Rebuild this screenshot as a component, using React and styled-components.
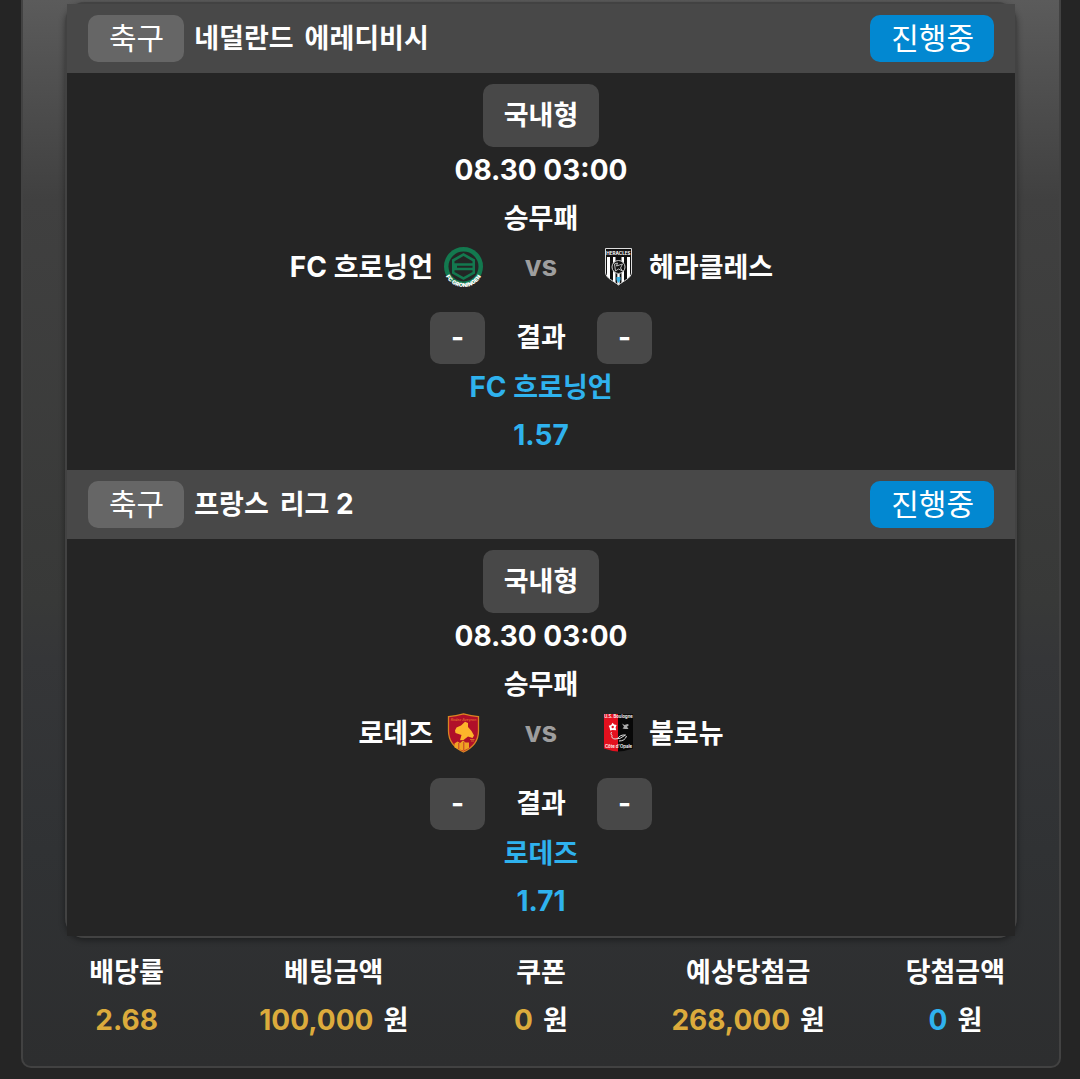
import React from 'react';
import styled, { createGlobalStyle, css } from 'styled-components';

const GlobalStyle = createGlobalStyle`
  *, *::before, *::after { box-sizing: border-box; }
  body {
    margin: 0;
    background: #252525;
    color: #fff;
    font-family: Inter, "Noto Sans CJK KR", sans-serif;
    font-size: 28px;
    font-weight: 700;
    line-height: 47px;
  }
`;

const Page = styled.main`
  min-height: 100vh;
  padding: 0 19px 11px 21px;
`;

const Slip = styled.section`
  padding: 2px 0 22px;
  border: 2px solid #424242;
  border-top: 0;
  border-radius: 0 0 10px 10px;
  background: linear-gradient(#5b5b5b 0, #404040 200px, #383938 600px, #353638 660px, #303234 850px, #2d2e2f 100%);
`;

const BetList = styled.div`
  margin: 0 42px 10px;
  border: 2px solid #424242;
  border-radius: 20px;
  box-shadow: 0 2px 6px rgba(0, 0, 0, 0.4);
`;

const Match = styled.article`
  background: #252525;
`;

const MatchHeader = styled.header`
  display: flex;
  align-items: center;
  gap: 10px;
  height: 69px;
  padding: 0 21px;
  background: #484848;
`;

const Tag = styled.span`
  padding: 0 20px 0 21px;
  border-radius: 10px;
  background: ${(p) => (p.$live ? '#0288d1' : '#666')};
  font-size: 30px;
  font-weight: 400;
`;

const League = styled.h2`
  display: flex;
  flex: 1;
  gap: 11px;
  margin: 0;
  font: inherit;
`;

const Hangul = styled.span`
  font-family: "Noto Sans CJK KR", sans-serif;
  font-size: 27px;
  line-height: 1;
`;

const MatchBody = styled.div`
  display: flex;
  flex-direction: column;
  align-items: center;
  padding: 11px 0 10px;
`;

const box = css`
  border-radius: 10px;
  background: #484848;
  text-align: center;
`;

const TypeBadge = styled.div`
  ${box}
  height: 63px;
  padding: 0 21px;
  line-height: 62px;
`;

const Line = styled.div`
  height: 48px;
  color: ${(p) => (p.$pick ? '#2fb2ee' : 'inherit')};
`;

const Teams = styled.div`
  display: grid;
  grid-template-columns: 1fr 114px 1fr;
  align-self: stretch;
  height: 48px;
`;

const Team = styled.div`
  display: flex;
  align-items: center;
  justify-content: ${(p) => (p.$home ? 'flex-end' : 'flex-start')};
  gap: 11px;

  svg { flex: none; }
`;

const Versus = styled.span`
  color: #9e9e9e;
  text-align: center;
`;

const Result = styled.div`
  display: grid;
  grid-template-columns: 55px 112px 55px;
  height: 52px;
  margin-top: 21px;
  line-height: 50px;
  text-align: center;
`;

const Score = styled.span`
  ${box}
`;

const Summary = styled.table`
  width: 100%;
  table-layout: fixed;
  border-collapse: collapse;

  th, td {
    height: 48px;
    padding: 0;
    font-weight: inherit;
    text-align: center;
  }
`;

const Amount = styled.span`
  color: ${(p) => (p.$won ? '#2fb2ee' : '#dcab3c')};
`;

const Unit = styled.span`
  margin-left: 10px;
`;

/* Renders Hangul runs and Latin runs in their own faces. */
const Mixed = ({ children }) =>
  children
    .split(/([가-힣]+)/)
    .filter(Boolean)
    .map((part, i) => (/[가-힣]/.test(part) ? <Hangul key={i}>{part}</Hangul> : part));

const Groningen = () => (
  <svg width="40" height="40" viewBox="0 0 40 40" role="img" aria-label="FC Groningen">
    <circle cx="19.500" cy="19.500" r="19.500" fill="#13794f" />
    <circle cx="19.500" cy="19.500" r="15" fill="#232625" />
    <path d="M19.500 6 31 12.500V26.500L19.500 33 8 26.500V12.500Z" fill="#13794f" />
    <path d="M19.500 9 28.500 14.300V16.200H10.500V14.300ZM13 18.800H28.500V20.700H13ZM10.500 23.300H28.500V25L19.500 30 10.500 25Z" fill="#232625" />
    <path id="groningen-arc" d="M1.500 28.500A19.800 19.800 0 0 0 37.500 28.500" fill="none" />
    <text fill="#fff" fontFamily="Inter, sans-serif" fontSize="5.600" fontWeight="900" textAnchor="middle">
      <textPath href="#groningen-arc" startOffset="50%">FC GRONINGEN</textPath>
    </text>
  </svg>
);

const Heracles = () => (
  <svg width="40" height="40" viewBox="0 0 40 40" role="img" aria-label="Heracles">
    <defs>
      <clipPath id="heracles-shield">
        <path d="M7.500 1.500H33.500V26C33 31 25.500 34 20.500 38 15.500 34 8 31 7.500 26Z" />
      </clipPath>
    </defs>
    <g clipPath="url(#heracles-shield)">
      <path d="M7 1H34V39H7Z" fill="#111" />
      <path d="M9 10H12V39H9ZM15 10H17.500V39H15ZM23.500 10H26V39H23.500ZM29 10H32V39H29ZM19.300 27H21.700V38H19.300Z" fill="#fff" />
      <circle cx="20.500" cy="20" r="6.500" fill="#111" stroke="#ccc" />
      <path d="M16.500 17 19.500 16 18.500 19 21.500 18 24.500 17 22.500 21 24.500 24 20.500 22 17.500 24Z" fill="none" stroke="#bbb" />
      <path d="M18.500 30H22.500V33L20.500 36 18.500 33Z" fill="#3db2e3" />
    </g>
    <path d="M7.500 1.500H33.500V26C33 31 25.500 34 20.500 38 15.500 34 8 31 7.500 26Z" fill="none" stroke="#ddd" />
    <text x="20.500" y="7.900" fill="#fff" fontFamily="Inter, sans-serif" fontSize="4.600" fontWeight="700" textAnchor="middle">HERACLES</text>
  </svg>
);

const Rodez = () => (
  <svg width="40" height="40" viewBox="0 0 40 40" role="img" aria-label="Rodez">
    <path d="M4.500 3.600Q12 2.800 19.500 .8 27 2.800 34.500 3.600V18C34.500 29 28 35 19.500 39 11 35 4.500 29 4.500 18Z" fill="#b00f29" stroke="#d98422" strokeWidth="1.300" />
    <path d="M12.500 14.500 17 12.500 21 8.800 24 10V14L27.500 18 30 22.500 28.500 25 24 23.500 19.500 27 16 27.300 17.500 22 11.500 20 11 17.500Z" fill="#fdb52b" />
    <path d="M10.500 34.500V30.500L13.500 28.500 16 30 19 27.500 21.500 29.500H25V35L19.500 37.800 14 36Z" fill="#f0a324" />
    <path d="M14.800 30V36M19.800 29V37" stroke="#b00f29" strokeWidth=".7" />
    <path d="M26 26.500H30.500M27 28H30" stroke="#df7b28" strokeWidth=".8" />
    <text x="19.500" y="8" fill="#e57a2a" fontFamily="Inter, sans-serif" fontSize="3.600" fontStyle="italic" fontWeight="500" textAnchor="middle">Rodez Aveyron</text>
  </svg>
);

const Boulogne = () => (
  <svg width="40" height="40" viewBox="0 0 40 40" role="img" aria-label="US Boulogne Côte d'Opale">
    <path d="M6 1H20V38.500Q13 38 6 35.500Z" fill="#e3101e" />
    <path d="M20 1H35V35.500Q28 38 20 38.500Z" fill="#080808" />
    <path d="M14.500 9.800 16.200 11.500 18.600 12 17.600 14.500 18.200 17.200 14.700 16.900 12.100 17.500 11.700 15 10.700 12.800 13.200 11.900Z" fill="#fff" />
    <circle cx="14.700" cy="14" r="1.200" fill="#e3101e" />
    <path d="M24 10.500 26.500 12 29.500 11 31 12 29 13.700 30.500 16H27L24.500 15.500 26 13.700Z" fill="#aaa" />
    <path d="M13.500 19Q12 21 14 22.500 13 25.500 17 26 22 26.500 27.500 22 22 21.500 19.500 25.500M21 28Q27 28 28.500 23" fill="none" stroke="#ddd" />
    <text x="20.500" y="5.300" fill="#fff" fontFamily="Inter, sans-serif" fontSize="4.200" fontWeight="600" textAnchor="middle">U.S. Boulogne</text>
    <text x="20.500" y="34.600" fill="#fff" fontFamily="Inter, sans-serif" fontSize="4.300" fontWeight="600" textAnchor="middle">Côte d'Opale</text>
  </svg>
);

const matches = [
  {
    country: '네덜란드', league: '에레디비시', time: '08.30 03:00',
    home: 'FC 흐로닝언', HomeCrest: Groningen, away: '헤라클레스', AwayCrest: Heracles,
    pick: 'FC 흐로닝언', odds: '1.57',
  },
  {
    country: '프랑스', league: '리그 2', time: '08.30 03:00',
    home: '로데즈', HomeCrest: Rodez, away: '불로뉴', AwayCrest: Boulogne,
    pick: '로데즈', odds: '1.71',
  },
];

const totals = [
  { label: '배당률', value: '2.68' },
  { label: '베팅금액', value: '100,000', unit: '원' },
  { label: '쿠폰', value: '0', unit: '원' },
  { label: '예상당첨금', value: '268,000', unit: '원' },
  { label: '당첨금액', value: '0', unit: '원', won: true },
];

const MatchCard = ({ country, league, time, home, HomeCrest, away, AwayCrest, pick, odds }) => (
  <Match>
    <MatchHeader>
      <Tag>축구</Tag>
      <League>
        <span><Mixed>{country}</Mixed></span>
        <span><Mixed>{league}</Mixed></span>
      </League>
      <Tag $live>진행중</Tag>
    </MatchHeader>
    <MatchBody>
      <TypeBadge><Hangul>국내형</Hangul></TypeBadge>
      <Line>{time}</Line>
      <Line><Hangul>승무패</Hangul></Line>
      <Teams>
        <Team $home>
          <span><Mixed>{home}</Mixed></span>
          <HomeCrest />
        </Team>
        <Versus>vs</Versus>
        <Team>
          <AwayCrest />
          <span><Mixed>{away}</Mixed></span>
        </Team>
      </Teams>
      <Result>
        <Score>-</Score>
        <span><Hangul>결과</Hangul></span>
        <Score>-</Score>
      </Result>
      <Line $pick><Mixed>{pick}</Mixed></Line>
      <Line $pick>{odds}</Line>
    </MatchBody>
  </Match>
);

export default function App() {
  return (
    <Page>
      <GlobalStyle />
      <Slip>
        <BetList>
          {matches.map((m) => <MatchCard key={m.country} {...m} />)}
        </BetList>
        <Summary>
          <thead>
            <tr>
              {totals.map((t) => <th key={t.label} scope="col"><Hangul>{t.label}</Hangul></th>)}
            </tr>
          </thead>
          <tbody>
            <tr>
              {totals.map((t) => (
                <td key={t.label}>
                  <Amount $won={t.won}>{t.value}</Amount>
                  {t.unit && <Unit><Hangul>{t.unit}</Hangul></Unit>}
                </td>
              ))}
            </tr>
          </tbody>
        </Summary>
      </Slip>
    </Page>
  );
}
